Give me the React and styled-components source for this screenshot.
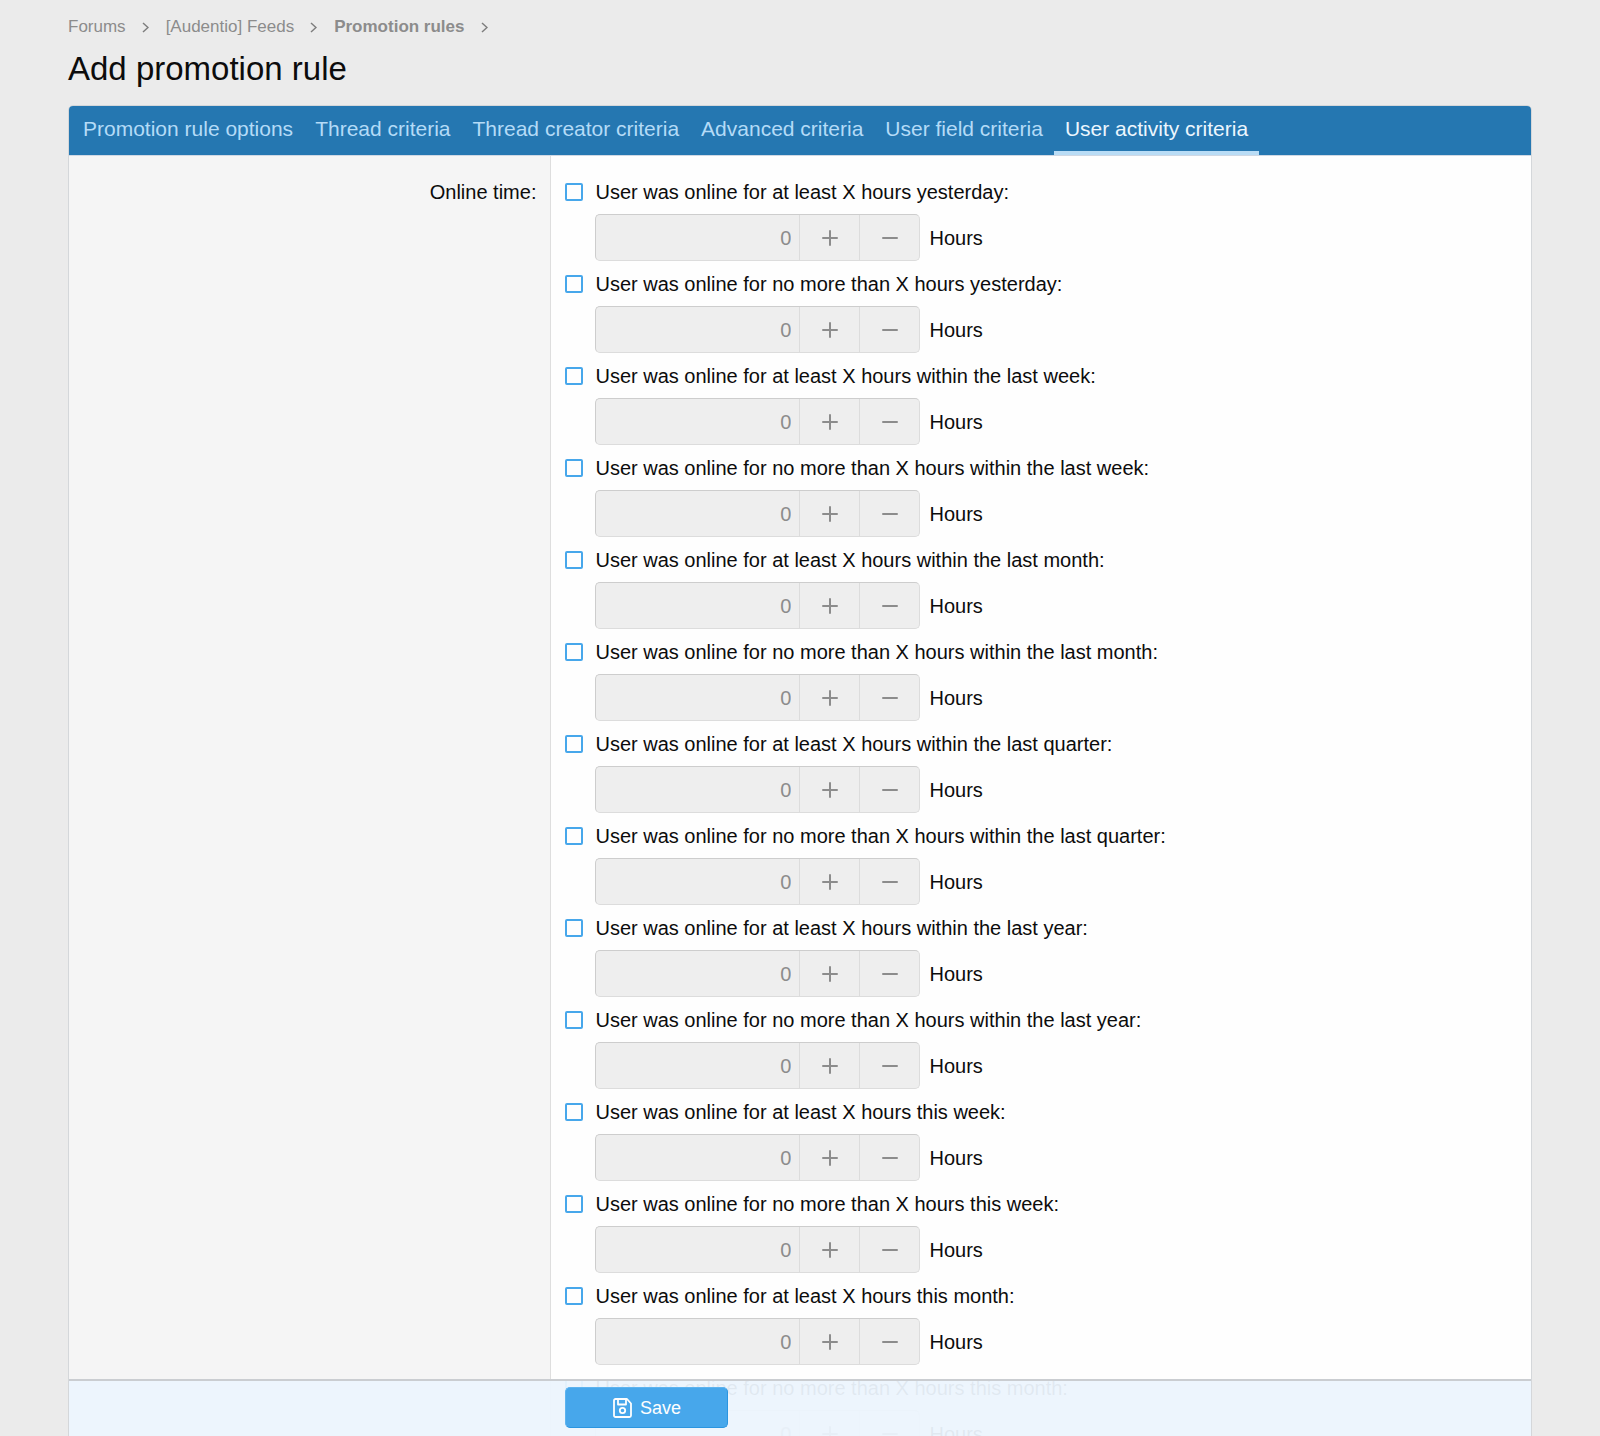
import React, { useState } from "react";
import styled, { createGlobalStyle } from "styled-components";

const GlobalStyle = createGlobalStyle`
  * {
    box-sizing: border-box;
  }
  body {
    margin: 0;
    background-color: #ebebeb;
    color: #0c0c0c;
    font-family: "Liberation Sans", Arial, sans-serif;
    font-size: 20px;
    line-height: 30px;
  }
  button,
  input {
    font: inherit;
  }
`;

const Page = styled.div`
  height: 100vh;
  padding: 0 68px;
  overflow-x: hidden;
  overflow-y: auto;
  scrollbar-width: none;
`;

const Breadcrumbs = styled.ul`
  display: flex;
  margin: 0;
  padding: 16px 0 0;
  list-style: none;
  font-size: 17px;
  line-height: 22px;
`;

const Crumb = styled.li`
  display: flex;
  align-items: center;
  gap: 16px;
  margin-right: 17px;
  font-weight: ${(props) => (props.$current ? "700" : "400")};
`;

const CrumbLink = styled.a`
  color: #8c8c8c;
  text-decoration: none;
`;

const Chevron = styled.svg`
  width: 7px;
  height: 11px;
  fill: none;
  stroke: #7d7d7d;
  stroke-width: 1.5;
`;

const Title = styled.h1`
  margin: 10px 0 15px;
  font-size: 33px;
  font-weight: 400;
  line-height: 42px;
`;

const Panel = styled.form`
  border: 1px solid #d4d7da;
  border-radius: 5px;
  background-color: #fefefe;
`;

const Tabs = styled.div`
  display: flex;
  padding: 0 3px;
  border-bottom: 1px solid #cfd8e4;
  border-radius: 4px 4px 0 0;
  background-color: #2577b1;
  font-size: 21px;
`;

const Tab = styled.button`
  padding: 8px 11px 7px;
  border: 0;
  border-bottom: 4px solid
    ${(props) => (props.$active ? "#b9dcf5" : "transparent")};
  background: none;
  color: ${(props) => (props.$active ? "#ecf6fe" : "#b4dbf7")};
  white-space: nowrap;
  cursor: pointer;
`;

const FormRow = styled.div`
  display: grid;
  grid-template-columns: 33% 1fr;
`;

const RowLabel = styled.div`
  padding: 21px 14px 21px 0;
  border-right: 1px solid #dedede;
  background-color: #f5f5f5;
  text-align: right;
`;

const CriteriaList = styled.ul`
  display: flex;
  flex-direction: column;
  gap: 8px;
  margin: 0;
  padding: 21px 14px;
  list-style: none;
`;

const Option = styled.label`
  display: flex;
  align-items: center;
  gap: 12px;
  width: fit-content;
`;

const Checkbox = styled.input`
  width: 18px;
  height: 18px;
  margin: 0;
  appearance: none;
  border: 2px solid #47a7eb;
  border-radius: 2px;
  background-color: #fefefe;
  &:checked {
    background-color: #47a7eb;
    box-shadow: inset 0 0 0 2px #fefefe;
  }
`;

const Dependent = styled.div`
  display: flex;
  align-items: center;
  gap: 9px;
  margin: 7px 0 0 30px;
`;

const NumberBox = styled.div`
  display: flex;
  width: 325px;
  height: 47px;
  border: 1px solid;
  border-color: #cdcdcd #dcdcdc #dcdcdc #cdcdcd;
  border-radius: 5px;
  background-color: ${(props) => (props.$disabled ? "#eeeeee" : "#fefefe")};
  color: ${(props) => (props.$disabled ? "#8c8c8c" : "#0c0c0c")};
  overflow: hidden;
`;

const NumberInput = styled.input`
  flex: 1;
  min-width: 0;
  padding: 0 8px;
  border: 0;
  background: none;
  color: inherit;
  text-align: right;
  appearance: textfield;
  &::-webkit-inner-spin-button {
    display: none;
  }
`;

const StepButton = styled.button`
  display: flex;
  align-items: center;
  justify-content: center;
  width: 60px;
  padding: 0;
  border: 0;
  border-left: 1px solid #dcdcdc;
  background: none;
  color: inherit;
`;

const StepIcon = styled.svg`
  width: 16px;
  height: 16px;
  fill: none;
  stroke: currentColor;
  stroke-width: 2;
  stroke-linecap: round;
`;

const SubmitBar = styled.div`
  position: sticky;
  bottom: 0;
  display: flex;
  padding: 6px 0 8px calc(33% + 14px);
  border-top: 2px solid #cacdd1;
  background-color: rgba(236, 244, 253, 0.95);
`;

const SaveButton = styled.button`
  display: flex;
  align-items: center;
  justify-content: center;
  gap: 8px;
  width: 163px;
  height: 41px;
  padding: 0;
  border: 1px solid;
  border-color: #5db3ef #2b95e0 #2b95e0 #5db3ef;
  border-radius: 5px;
  background-color: #47a7eb;
  color: #fefefe;
  font-size: 18px;
  cursor: pointer;
`;

const SaveIcon = styled.svg`
  width: 19px;
  height: 20px;
  fill: none;
  stroke: currentColor;
  stroke-width: 1.8;
  stroke-linejoin: round;
`;

const crumbs = ["Forums", "[Audentio] Feeds", "Promotion rules"];

const tabs = [
  "Promotion rule options",
  "Thread criteria",
  "Thread creator criteria",
  "Advanced criteria",
  "User field criteria",
  "User activity criteria",
];

const periods = [
  "yesterday",
  "within the last week",
  "within the last month",
  "within the last quarter",
  "within the last year",
  "this week",
  "this month",
];

const limits = ["at least", "no more than"];

const Criterion = ({ label }) => {
  const [enabled, setEnabled] = useState(false);
  const [hours, setHours] = useState(0);

  return (
    <li>
      <Option>
        <Checkbox
          type="checkbox"
          checked={enabled}
          onChange={(e) => setEnabled(e.target.checked)}
        />
        {label}
      </Option>
      <Dependent>
        <NumberBox $disabled={!enabled}>
          <NumberInput
            type="number"
            min="0"
            aria-label={label}
            value={hours}
            disabled={!enabled}
            onChange={(e) => setHours(Number(e.target.value))}
          />
          <StepButton
            type="button"
            aria-label="Increase"
            disabled={!enabled}
            onClick={() => setHours(hours + 1)}
          >
            <StepIcon viewBox="0 0 16 16">
              <path d="M8 1v14M1 8h14" />
            </StepIcon>
          </StepButton>
          <StepButton
            type="button"
            aria-label="Decrease"
            disabled={!enabled}
            onClick={() => setHours(Math.max(0, hours - 1))}
          >
            <StepIcon viewBox="0 0 16 16">
              <path d="M1 8h14" />
            </StepIcon>
          </StepButton>
        </NumberBox>
        <span>Hours</span>
      </Dependent>
    </li>
  );
};

const App = () => {
  const [activeTab, setActiveTab] = useState("User activity criteria");

  return (
    <Page>
      <GlobalStyle />
      <Breadcrumbs>
        {crumbs.map((crumb, index) => (
          <Crumb key={crumb} $current={index === crumbs.length - 1}>
            <CrumbLink href="#">{crumb}</CrumbLink>
            <Chevron viewBox="0 0 7 11">
              <path d="M1 1l5 4.5-5 4.5" />
            </Chevron>
          </Crumb>
        ))}
      </Breadcrumbs>
      <Title>Add promotion rule</Title>
      <Panel onSubmit={(e) => e.preventDefault()}>
        <Tabs role="tablist">
          {tabs.map((tab) => (
            <Tab
              key={tab}
              type="button"
              role="tab"
              aria-selected={tab === activeTab}
              $active={tab === activeTab}
              onClick={() => setActiveTab(tab)}
            >
              {tab}
            </Tab>
          ))}
        </Tabs>
        <FormRow>
          <RowLabel>Online time:</RowLabel>
          <CriteriaList>
            {periods.map((period) =>
              limits.map((limit) => (
                <Criterion
                  key={`${period} ${limit}`}
                  label={`User was online for ${limit} X hours ${period}:`}
                />
              )),
            )}
          </CriteriaList>
        </FormRow>
        <SubmitBar>
          <SaveButton type="submit">
            <SaveIcon viewBox="0 0 19 20">
              <path d="M2.5 1H14l4 4.5v12a1.5 1.5 0 0 1-1.5 1.5h-14A1.5 1.5 0 0 1 1 17.500v-15A1.500 1.500 0 0 1 2.500 1z" />
              <path d="M5 1v5.500h8V1" />
              <circle cx="9.500" cy="12.500" r="2.700" />
            </SaveIcon>
            Save
          </SaveButton>
        </SubmitBar>
      </Panel>
    </Page>
  );
};

export default App;
